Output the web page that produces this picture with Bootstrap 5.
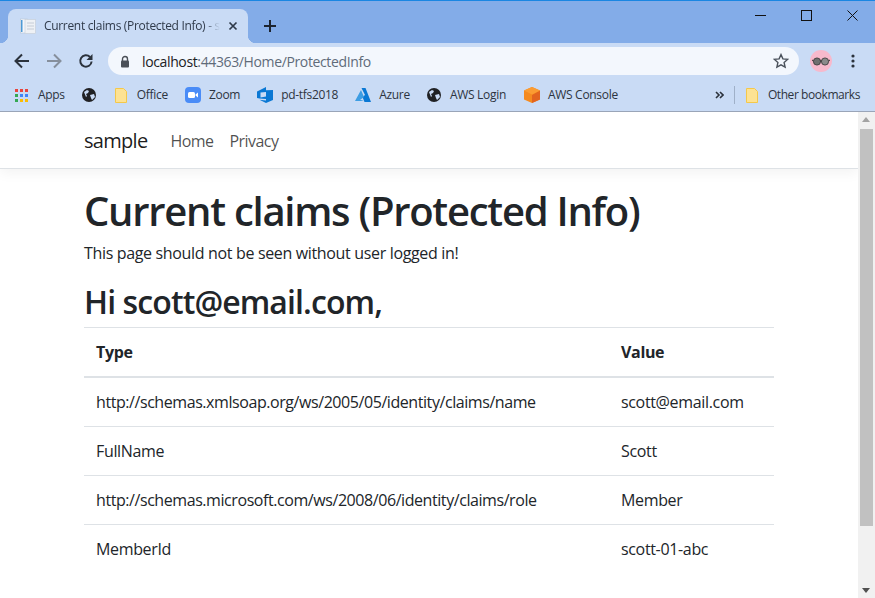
<!DOCTYPE html>
<html lang="en">
<head>
  <meta charset="UTF-8">
  <title>Current claims (Protected Info)</title>
  <link href="https://cdn.jsdelivr.net/npm/bootstrap@5.3.3/dist/css/bootstrap.min.css" rel="stylesheet">
  <style>
    html, body { height: 100%; overflow: hidden; }
    body { font-family: "Open Sans", "Noto Sans", sans-serif; color: #212529; font-size: 16px; letter-spacing: -0.34px; }
    .win-shell { height: 598px; }

    .title-strip { height: 43px; background: #83ace8; border-top: 1px solid #1a86e2; }
    .tab-shape { width: 240px; height: 34px; margin-left: 8px; margin-top: 8px; background: #c9dbf5; border-radius: 8px 8px 0 0; position: relative; padding-left: 12px; padding-right: 10px; }
    .tab-shape::before, .tab-shape::after { content: ""; position: absolute; bottom: 0; width: 8px; height: 8px; }
    .tab-shape::before { left: -8px; background: radial-gradient(circle at 0 0, transparent 8px, #c9dbf5 8.5px); }
    .tab-shape::after { right: -8px; background: radial-gradient(circle at 100% 0, transparent 8px, #c9dbf5 8.5px); }
    .tab-text { font-size: 12px; color: #2f3a4a; white-space: nowrap; margin-left: 8px; letter-spacing: -0.32px; -webkit-mask-image: linear-gradient(90deg, #000 160px, transparent 176px); mask-image: linear-gradient(90deg, #000 160px, transparent 176px); }
    .plus-icon { margin: 18px 0 0 15px; }
    .win-btn { width: 46px; height: 29px; }

    .tool-strip { height: 36px; background: #c9dbf5; padding-left: 6px; }
    .tool-btn { width: 32px; }
    .omni { width: 691px; height: 28px; background: #f3f7fd; border-radius: 14px; margin-left: 6px; padding: 0 10px 0 12px; font-size: 14px; letter-spacing: -0.37px; color: #5f6b7a; }
    .omni b { font-weight: 400; color: #202124; }
    .avatar-dot { width: 22px; height: 22px; border-radius: 50%; background: #f7b9cc; margin-left: 11px; }
    .menu-dots { margin-left: 19px; }

    .mark-strip { height: 33px; background: #c9dbf5; border-bottom: 1px solid #9aa5b8; font-size: 12px; letter-spacing: -0.3px; color: #2d3440; white-space: nowrap; padding-left: 15px; }
    .mark-item { gap: 10px; }
    .mark-item.next-mark { margin-left: 17px; }
    .mark-item.wide-mark { margin-left: 19px; }
    .mark-item.cube-mark { margin-left: 18px; }
    .mark-item.tight-gap { gap: 8px; }
    .mark-item.mid-gap { gap: 9px; }
    .mark-sep { width: 1px; height: 18px; background: #9fb0c8; margin: 0 11px 0 10px; }
    .mark-push { margin-left: auto; }
    .mark-end { margin-right: 15px; letter-spacing: -0.43px; }

    .page-wrap { height: 486px; overflow: hidden; }
    .page-scroll { width: 858px; }
    .site-nav { height: 57px; padding-top: 1px; background: #fff; border-bottom: 1px solid #dee2e6; box-shadow: 0 4px 12px rgba(0,0,0,.05); }
    .site-inner { width: 720px; margin: 0 auto; padding: 0 15px; }
    .site-brand { font-size: 20px; color: rgba(0,0,0,.9); margin-right: 15px; letter-spacing: -0.7px; }
    .site-link { padding: 0 8px; color: rgba(0,0,0,.7); letter-spacing: -0.55px; text-decoration: none; }
    .site-main { padding-top: 18px; }
    .claims-title { font-size: 40px; font-weight: 600; line-height: 48px; margin-bottom: 6px; letter-spacing: -1.26px; }
    .claims-sub { margin-bottom: 18px; line-height: 24px; }
    .claims-hi { font-size: 32px; font-weight: 600; line-height: 38px; margin-bottom: 6px; letter-spacing: -0.9px; }
    .claims-table { margin: 0; color: #212529; }
    .claims-table th, .claims-table td { padding: 12px; line-height: 24px; border-bottom: 0; border-top: 1px solid #dee2e6; }
    .claims-table thead th { border-bottom: 2px solid #dee2e6; font-weight: 700; }
    .claims-table tbody tr:first-child td { border-top: 0; }
    .claims-table .col-val { width: 165px; }
    .claims-table .claim-url { letter-spacing: -0.43px; }

    .fake-scroll { width: 17px; background: #f1f1f1; position: relative; }
    .fake-thumb { position: absolute; left: 2px; right: 2px; top: 17px; height: 397px; background: #c1c1c1; }
    .arrow-up, .arrow-down { position: absolute; left: 4px; width: 0; height: 0; border-left: 4.5px solid transparent; border-right: 4.5px solid transparent; }
    .arrow-up { top: 5px; border-bottom: 5px solid #a3a3a3; }
    .arrow-down { bottom: 5px; border-top: 5px solid #505050; }
  </style>
</head>
<body>
  <div class="win-shell d-flex flex-column">
    <!-- browser title bar -->
    <div class="title-strip d-flex align-items-start">
      <div class="tab-shape d-flex align-items-center">
        <svg width="16" height="16" viewBox="0 0 16 16"><rect x=".5" y="1" width="7" height="14" fill="#f4f7fb" stroke="#b9c6d6" stroke-width=".6"/><rect x="1" y="2" width="1.5" height="12" fill="#4d9ad6"/><rect x="5" y="1.5" width="10.5" height="14" fill="#eef1f5" stroke="#c3cbd6" stroke-width=".6"/><path d="M7 5h7M7 8h7M7 11h7" stroke="#c5ccd6"/></svg>
        <div class="tab-text">Current claims (Protected Info) - s</div>
        <svg class="ms-auto" width="10" height="10" viewBox="0 0 10 10"><path d="M1.5 1.5l7 7M8.5 1.5l-7 7" stroke="#2f3a4a" stroke-width="1.7"/></svg>
      </div>
      <svg class="plus-icon" width="14" height="14" viewBox="0 0 14 14"><path d="M7 1v12M1 7h12" stroke="#1c2430" stroke-width="2"/></svg>
      <div class="ms-auto d-flex">
        <div class="win-btn d-flex align-items-center justify-content-center"><svg width="11" height="11" viewBox="0 0 11 11"><path d="M0 5.5h11" stroke="#111"/></svg></div>
        <div class="win-btn d-flex align-items-center justify-content-center"><svg width="11" height="11" viewBox="0 0 11 11"><rect x=".5" y=".5" width="10" height="10" fill="none" stroke="#111"/></svg></div>
        <div class="win-btn d-flex align-items-center justify-content-center"><svg width="11" height="11" viewBox="0 0 11 11"><path d="M.5.5l10 10M10.5.5l-10 10" stroke="#111"/></svg></div>
      </div>
    </div>

    <!-- toolbar -->
    <div class="tool-strip d-flex align-items-center">
      <div class="tool-btn d-flex justify-content-center"><svg width="16" height="16" viewBox="0 0 16 16"><path d="M15 8H2M8 1.5L1.5 8 8 14.5" fill="none" stroke="#2b323c" stroke-width="2"/></svg></div>
      <div class="tool-btn d-flex justify-content-center"><svg width="16" height="16" viewBox="0 0 16 16"><path d="M1 8h13M8 1.5L14.5 8 8 14.5" fill="none" stroke="#868f9c" stroke-width="2"/></svg></div>
      <div class="tool-btn d-flex justify-content-center"><svg width="16" height="16" viewBox="0 0 16 16"><path d="M13.6 8.5A5.7 5.7 0 1 1 12 4" fill="none" stroke="#2b323c" stroke-width="2"/><path d="M14.5 1v6h-6z" fill="#2b323c"/></svg></div>
      <div class="omni d-flex align-items-center">
        <svg width="10" height="13" viewBox="0 0 10 13"><path d="M2.5 6V4a2.5 2.5 0 0 1 5 0v2" fill="none" stroke="#4a4f57" stroke-width="1.4"/><rect x="1" y="5.5" width="8" height="7" rx="1" fill="#4a4f57"/></svg>
        <span class="ms-2 ps-1"><b>localhost</b>:44363/Home/ProtectedInfo</span>
        <svg class="ms-auto" width="16" height="16" viewBox="0 0 16 16"><path d="M8 1.6l1.9 4.3 4.7.5-3.5 3.1 1 4.6L8 11.8l-4.1 2.3 1-4.6L1.4 6.4l4.7-.5z" fill="none" stroke="#4b525c" stroke-width="1.4"/></svg>
      </div>
      <div class="avatar-dot d-flex align-items-center justify-content-center">
        <svg width="18" height="9" viewBox="0 0 18 9"><circle cx="5" cy="4.5" r="3.6" fill="#6f6f6f" stroke="#333" stroke-width=".8"/><circle cx="13" cy="4.5" r="3.6" fill="#8a8a8a" stroke="#333" stroke-width=".8"/><path d="M8 4h2M0 3l1.5 1M18 3l-1.5 1" stroke="#333"/></svg>
      </div>
      <svg class="menu-dots" width="4" height="14" viewBox="0 0 4 14"><circle cx="2" cy="2" r="1.6" fill="#2b323c"/><circle cx="2" cy="7" r="1.6" fill="#2b323c"/><circle cx="2" cy="12" r="1.6" fill="#2b323c"/></svg>
    </div>

    <!-- bookmarks -->
    <div class="mark-strip d-flex align-items-center">
      <div class="mark-item d-flex align-items-center">
        <svg width="13" height="13" viewBox="0 0 13 13"><g><rect width="3" height="3" fill="#e8453c"/><rect x="5" width="3" height="3" fill="#e8453c"/><rect x="10" width="3" height="3" fill="#e8453c"/><rect y="5" width="3" height="3" fill="#34a853"/><rect x="5" y="5" width="3" height="3" fill="#4285f4"/><rect x="10" y="5" width="3" height="3" fill="#4285f4"/><rect y="10" width="3" height="3" fill="#34a853"/><rect x="5" y="10" width="3" height="3" fill="#fbbc05"/><rect x="10" y="10" width="3" height="3" fill="#fbbc05"/></g></svg>
        <span>Apps</span>
      </div>
      <div class="mark-item next-mark d-flex align-items-center">
        <svg width="14" height="14" viewBox="0 0 14 14"><circle cx="7" cy="7" r="7" fill="#202124"/><path d="M2 4l3-2 2 1-1 2-2 1 1 2-1 1zM8 7l4-1 1 3-3 3-1-2z" fill="#c9dbf5"/></svg>
      </div>
      <div class="mark-item wide-mark d-flex align-items-center">
        <svg width="12" height="15" viewBox="0 0 12 15"><path d="M.5.5h8l3 3v11H.5z" fill="#fde293" stroke="#f4c84b"/></svg>
        <span>Office</span>
      </div>
      <div class="mark-item next-mark tight-gap d-flex align-items-center">
        <svg width="16" height="16" viewBox="0 0 16 16"><rect width="16" height="16" rx="4" fill="#4a8cf7"/><rect x="3" y="5" width="7" height="6" rx="1.5" fill="#fff"/><path d="M10.5 7.5L13 5.5v5l-2.5-2z" fill="#fff"/></svg>
        <span>Zoom</span>
      </div>
      <div class="mark-item next-mark tight-gap d-flex align-items-center">
        <svg width="16" height="16" viewBox="0 0 16 16"><path d="M0 4.5L9 0v3.2L16 3v10l-7 3-6.5-3.2L9 13.5V12l-6.5-.5L0 11zM3.5 5.5v5L9 9.5V5z" fill="#0a78d4" fill-rule="evenodd"/><rect x="11" y="4.5" width="3" height="7" fill="#0a78d4"/></svg>
        <span>pd-tfs2018</span>
      </div>
      <div class="mark-item next-mark tight-gap d-flex align-items-center">
        <svg width="16" height="14" viewBox="0 0 16 14"><path d="M6.5 0h4L16 14H9.5L7.5 9 10 7z" fill="#0a78d4"/><path d="M6 2L0 13h6l3-1H5l4-3z" fill="#3d9de3"/></svg>
        <span>Azure</span>
      </div>
      <div class="mark-item next-mark mid-gap d-flex align-items-center">
        <svg width="14" height="14" viewBox="0 0 14 14"><circle cx="7" cy="7" r="7" fill="#202124"/><path d="M2 4l3-2 2 1-1 2-2 1 1 2-1 1zM8 7l4-1 1 3-3 3-1-2z" fill="#c9dbf5"/></svg>
        <span>AWS Login</span>
      </div>
      <div class="mark-item cube-mark tight-gap d-flex align-items-center">
        <svg width="16" height="16" viewBox="0 0 16 16"><path d="M8 0l8 3.5v9L8 16l-8-3.5v-9z" fill="#f58a1f"/><path d="M8 8l8-4.5v9L8 16z" fill="#e2641f"/><path d="M8 7.5L0 3.5 8 0l8 3.5z" fill="#fb9c32"/></svg>
        <span>AWS Console</span>
      </div>
      <svg class="mark-push" width="9" height="8" viewBox="0 0 9 8"><path d="M1 1l3 3-3 3M5 1l3 3-3 3" fill="none" stroke="#2b323c" stroke-width="1.6"/></svg>
      <div class="mark-sep"></div>
      <div class="mark-item mark-end d-flex align-items-center">
        <svg width="12" height="15" viewBox="0 0 12 15"><path d="M.5.5h8l3 3v11H.5z" fill="#fde293" stroke="#f4c84b"/></svg>
        <span>Other bookmarks</span>
      </div>
    </div>

    <!-- page -->
    <div class="page-wrap d-flex">
      <div class="page-scroll">
        <nav class="site-nav d-flex align-items-center">
          <div class="site-inner d-flex align-items-center">
            <span class="site-brand">sample</span>
            <a class="site-link" href="#">Home</a>
            <a class="site-link" href="#">Privacy</a>
          </div>
        </nav>
        <div class="site-inner site-main">
          <h1 class="claims-title">Current claims (Protected Info)</h1>
          <p class="claims-sub">This page should not be seen without user logged in!</p>
          <h2 class="claims-hi">Hi scott@email.com,</h2>
          <table class="table claims-table">
            <thead>
              <tr><th>Type</th><th class="col-val">Value</th></tr>
            </thead>
            <tbody>
              <tr><td class="claim-url">http://schemas.xmlsoap.org/ws/2005/05/identity/claims/name</td><td>scott@email.com</td></tr>
              <tr><td>FullName</td><td>Scott</td></tr>
              <tr><td class="claim-url">http://schemas.microsoft.com/ws/2008/06/identity/claims/role</td><td>Member</td></tr>
              <tr><td>MemberId</td><td>scott-01-abc</td></tr>
            </tbody>
          </table>
        </div>
      </div>
      <div class="fake-scroll">
        <div class="arrow-up"></div>
        <div class="fake-thumb"></div>
        <div class="arrow-down"></div>
      </div>
    </div>
  </div>
  <script src="https://cdn.jsdelivr.net/npm/bootstrap@5.3.3/dist/js/bootstrap.bundle.min.js"></script>
</body>
</html>
